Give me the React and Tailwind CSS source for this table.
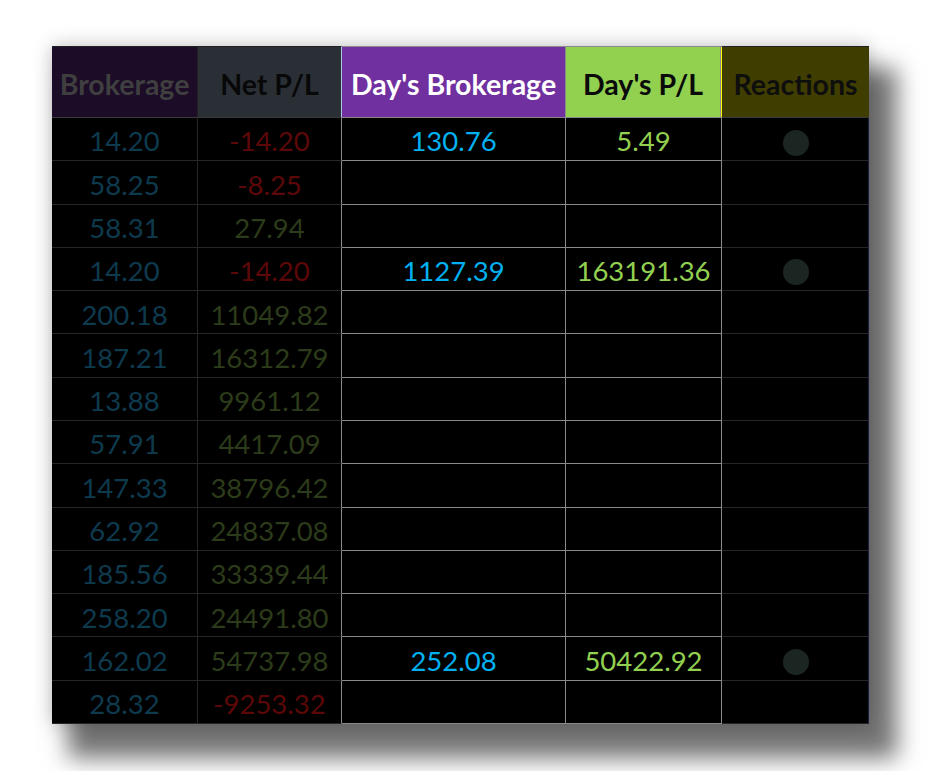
import React from "react";

const rows = [
  ["14.20", "-14.20", "130.76", "5.49", true],
  ["58.25", "-8.25", "", "", false],
  ["58.31", "27.94", "", "", false],
  ["14.20", "-14.20", "1127.39", "163191.36", true],
  ["200.18", "11049.82", "", "", false],
  ["187.21", "16312.79", "", "", false],
  ["13.88", "9961.12", "", "", false],
  ["57.91", "4417.09", "", "", false],
  ["147.33", "38796.42", "", "", false],
  ["62.92", "24837.08", "", "", false],
  ["185.56", "33339.44", "", "", false],
  ["258.20", "24491.80", "", "", false],
  ["162.02", "54737.98", "252.08", "50422.92", true],
  ["28.32", "-9253.32", "", "", false],
];

export default function App() {
  return (
    <div className="w-[933px] h-[771px] bg-white overflow-hidden pt-[46px] pl-[52px]" style={{ fontFamily: "Lato, 'Liberation Sans', sans-serif" }}>
      <div className="w-[817px] h-[678px] bg-black grid grid-cols-[146px_144px_224px_156px_147px] grid-rows-[72px_repeat(14,minmax(0,1fr))] shadow-[22px_28px_22px_6px_rgba(0,0,0,0.55),0_0_18px_rgba(0,0,0,0.25)] border-r border-r-[#1c2142] leading-none">
        <div className="bg-[#1c0c28] border-t border-t-[#222] border-b border-b-[#3a3a3a] border-r border-r-[#222] flex items-center justify-center text-[#3f3f3f] font-bold text-[28.5px] pt-[4px]">Brokerage</div>
        <div className="bg-[#2a2f35] border-t border-t-[#222] border-b border-b-[#3a3a3a] border-r border-r-[#a9cde0] flex items-center justify-center text-[#080808] font-bold text-[28.5px] pt-[4px]">Net P/L</div>
        <div className="bg-[#7030a0] border-t border-t-[#8a8a8a] border-b border-b-[#8a8a8a] border-r border-r-[#8a8a8a] flex items-center justify-center text-white font-bold text-[28.5px] pt-[4px]">Day's Brokerage</div>
        <div className="bg-[#92d050] border-t border-t-[#8a8a8a] border-b border-b-[#8a8a8a] border-r-2 border-r-[#8a8a8a] flex items-center justify-center text-[#0a0a0a] font-bold text-[28.5px] pt-[4px] relative">
          Day's P/L
          <div className="absolute right-[-2px] top-0 bottom-0 w-px bg-[#ffff00]" />
        </div>
        <div className="bg-[#403d00] border-t border-t-[#222] border-b border-b-[#3a3a3a] flex items-center justify-center text-[#0e0e0e] font-bold text-[28.5px] pt-[4px]">Reactions</div>
        {rows.map((r, i) => {
          const neg = r[1].startsWith("-");
          return (
            <React.Fragment key={i}>
              <div className="border-b border-b-[#262626] border-r border-r-[#262626] flex items-center justify-center text-[#0e3a4e] text-[27.5px] pt-[4px]">{r[0]}</div>
              <div className={"border-b border-b-[#262626] border-r border-r-[#8a8a8a] flex items-center justify-center text-[27.5px] pt-[4px] " + (neg ? "text-[#5c0808]" : "text-[#2c3b19]")}>{r[1]}</div>
              <div className="border-b border-b-[#8a8a8a] border-r border-r-[#8a8a8a] flex items-center justify-center text-[#00b0f0] text-[27.5px] pt-[4px]">{r[2]}</div>
              <div className="border-b border-b-[#8a8a8a] border-r border-r-[#8a8a8a] flex items-center justify-center text-[#92d050] text-[27.5px] pt-[4px]">{r[3]}</div>
              <div className="border-b border-b-[#262626] flex items-center justify-center pt-[7px]">
                {r[4] && <div className="w-[26px] h-[26px] rounded-full bg-[#1b2622]" />}
              </div>
            </React.Fragment>
          );
        })}
      </div>
    </div>
  );
}
